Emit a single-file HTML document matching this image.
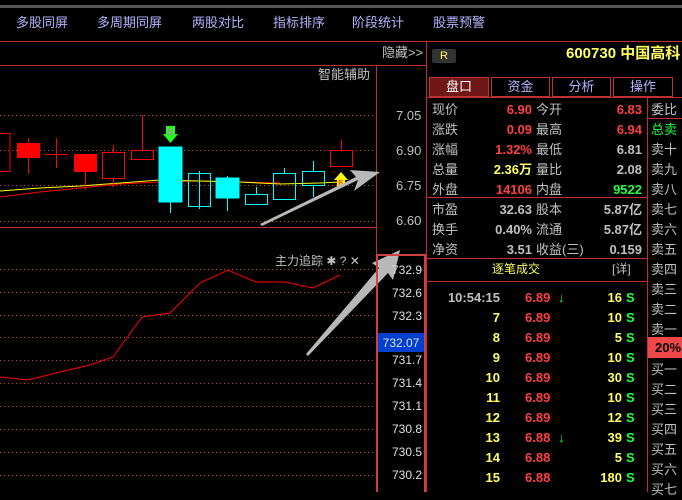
<!DOCTYPE html>
<html><head><meta charset="utf-8"><style>
*{margin:0;padding:0;box-sizing:border-box}
body{width:682px;height:492px;background:#000;overflow:hidden;position:relative;font-family:"Liberation Sans","Noto Sans CJK SC",sans-serif;font-size:13px}
.a{position:absolute;white-space:nowrap;line-height:16px}
.m{color:#b4b4ff;font-size:13px;top:15px}
.g{color:#c0c0c0}.r{color:#ff4040}.y{color:#ffff60}.gr{color:#20ff40}.w{color:#e0e0e0}
.rt{text-align:right}
.mono{font-family:"Liberation Mono","Noto Sans CJK SC",monospace}
</style></head><body>
<div class="a" style="left:0;top:5px;width:682px;height:3px;background:#555"></div>
<div class="a m" style="left:16px">多股同屏</div>
<div class="a m" style="left:97px">多周期同屏</div>
<div class="a m" style="left:192px">两股对比</div>
<div class="a m" style="left:273px">指标排序</div>
<div class="a m" style="left:352px">阶段统计</div>
<div class="a m" style="left:433px">股票预警</div>
<div class="a" style="left:0;top:41px;width:426px;height:1px;background:#c03030"></div>
<div class="a" style="left:426px;top:41px;width:256px;height:1px;background:#c03030"></div>
<div class="a" style="left:426px;top:41px;width:1px;height:451px;background:#c03030"></div>
<div class="a g" style="left:382px;top:45px">隐藏&gt;&gt;</div>
<div class="a" style="left:0;top:65px;width:426px;height:1px;background:#c03030"></div>
<div class="a" style="left:376px;top:65px;width:1px;height:190px;background:#c03030"></div>
<div class="a g" style="left:318px;top:67px">智能辅助</div>
<div class="a" style="left:0;top:227px;width:376px;height:1px;background:#c03030"></div>
<div class="a g" style="left:275px;top:253px;font-size:12px">主力追踪 ✱ ? ✕</div>
<svg class="a" style="left:0;top:0" width="426" height="492">
<g stroke="#d04040" stroke-dasharray="1,3" stroke-width="1">
<line x1="0" y1="115.5" x2="376" y2="115.5"/><line x1="0" y1="150.5" x2="376" y2="150.5"/><line x1="0" y1="185.5" x2="376" y2="185.5"/><line x1="0" y1="221.5" x2="376" y2="221.5"/>
<line x1="0" y1="269.5" x2="376" y2="269.5"/><line x1="0" y1="292.5" x2="376" y2="292.5"/><line x1="0" y1="315.5" x2="376" y2="315.5"/><line x1="0" y1="337.5" x2="376" y2="337.5"/><line x1="0" y1="360.5" x2="376" y2="360.5"/><line x1="0" y1="383.5" x2="376" y2="383.5"/><line x1="0" y1="406.5" x2="376" y2="406.5"/><line x1="0" y1="429.5" x2="376" y2="429.5"/><line x1="0" y1="452.5" x2="376" y2="452.5"/><line x1="0" y1="475.5" x2="376" y2="475.5"/>
</g>
<polyline fill="none" stroke="#ff0000" points="0,197 40,192 80,188 120,184 160,182 200,181 240,182 280,183"/>
<polyline fill="none" stroke="#ffff00" points="0,191 40,188 80,186 120,183 160,180 200,181 240,182 280,184 320,183 340,182"/>
<g stroke="#ff0000" fill="none">
<rect x="-5" y="133.5" width="15" height="38"/>
<rect x="17.5" y="143.5" width="22" height="14" fill="#ff0000"/><line x1="28.5" y1="138" x2="28.5" y2="174"/>
<line x1="56.5" y1="138" x2="56.5" y2="168"/><line x1="45" y1="154.5" x2="68" y2="154.5"/>
<rect x="74.5" y="154.5" width="22" height="17" fill="#ff0000"/><line x1="85.5" y1="171" x2="85.5" y2="190"/>
<rect x="102.5" y="152.5" width="22" height="26"/><line x1="113.5" y1="145" x2="113.5" y2="152"/><line x1="113.5" y1="178" x2="113.5" y2="187"/>
<rect x="131.5" y="150.5" width="22" height="9"/><line x1="142.5" y1="115" x2="142.5" y2="150"/>
<rect x="330.5" y="150.5" width="22" height="16"/><line x1="341.5" y1="140" x2="341.5" y2="150"/>
</g>
<g stroke="#00ffff" fill="none">
<rect x="159" y="147" width="23" height="55" fill="#00ffff"/><line x1="170.5" y1="202" x2="170.5" y2="213"/>
<rect x="188.5" y="173.5" width="22" height="33"/><line x1="199.5" y1="171" x2="199.5" y2="209"/>
<rect x="216" y="178" width="23" height="20" fill="#00ffff"/><line x1="227.5" y1="176" x2="227.5" y2="211"/>
<rect x="245.5" y="194.5" width="22" height="10"/><line x1="256.5" y1="187" x2="256.5" y2="194"/>
<rect x="273.5" y="173.5" width="22" height="26"/><line x1="284.5" y1="168" x2="284.5" y2="173"/>
<rect x="302.5" y="171.5" width="22" height="14"/><line x1="313.5" y1="161" x2="313.5" y2="171"/><line x1="313.5" y1="185" x2="313.5" y2="197"/>
</g>
<polygon points="163,134 178,134 170.5,143" fill="#20ff20"/><rect x="166" y="126" width="9" height="9" fill="#20ff20"/>
<text x="167" y="135" font-size="9" fill="#ff40ff" font-family="Liberation Sans">S</text>
<polygon points="334,180 341,172 348,180" fill="#ffff00"/><rect x="337" y="180" width="8" height="6" fill="#ffff00"/>
<text x="338" y="186" font-size="8" fill="#ff0000">B</text>
<polyline fill="none" stroke="#ff0000" points="0,377 28,380 60,372 90,365 113,357 142,317 170,313 200,283 228,270 256,282 285,282 313,288 340,275"/>
<polygon points="262,226 358,180 354,191 380,172 350,170 356,177 260,224" fill="#b8b8b8"/>
<polygon points="308,356 388,273 393,280 400,250 372,263 379,268 306,354" fill="#b8b8b8"/>
</svg>
<div class="a g" style="left:396px;top:108px">7.05</div>
<div class="a g" style="left:396px;top:143px">6.90</div>
<div class="a g" style="left:396px;top:178px">6.75</div>
<div class="a g" style="left:396px;top:213px">6.60</div>
<div class="a" style="left:376px;top:254px;width:50px;height:238px;border:2px solid #d04040;border-bottom:none"></div>
<div class="a" style="left:378px;top:333px;width:46px;height:19px;background:#0040d0"></div>
<div class="a w" style="left:378px;top:335px;width:46px;text-align:center;font-size:12px">732.07</div>
<div class="a w rt" style="left:378px;top:262px;width:44px;font-size:12px">732.9</div>
<div class="a w rt" style="left:378px;top:285px;width:44px;font-size:12px">732.6</div>
<div class="a w rt" style="left:378px;top:308px;width:44px;font-size:12px">732.3</div>
<div class="a w rt" style="left:378px;top:352px;width:44px;font-size:12px">731.7</div>
<div class="a w rt" style="left:378px;top:375px;width:44px;font-size:12px">731.4</div>
<div class="a w rt" style="left:378px;top:398px;width:44px;font-size:12px">731.1</div>
<div class="a w rt" style="left:378px;top:421px;width:44px;font-size:12px">730.8</div>
<div class="a w rt" style="left:378px;top:444px;width:44px;font-size:12px">730.5</div>
<div class="a w rt" style="left:378px;top:467px;width:44px;font-size:12px">730.2</div>

<div class="a" style="left:432px;top:49px;width:24px;height:14px;background:#333;border-radius:2px"></div>
<div class="a y" style="left:440px;top:48px;font-size:11px">R</div>
<div class="a y" style="left:566px;top:46px;font-size:15px;font-weight:bold">600730 中国高科</div>
<div class="a" style="left:429px;top:77px;width:60px;height:20px;background:#701818;border:1px solid #c03030;color:#fff;text-align:center;line-height:18px">盘口</div>
<div class="a" style="left:491px;top:77px;width:59px;height:20px;border:1px solid #c03030;color:#b4b4ff;text-align:center;line-height:18px">资金</div>
<div class="a" style="left:552px;top:77px;width:59px;height:20px;border:1px solid #c03030;color:#b4b4ff;text-align:center;line-height:18px">分析</div>
<div class="a" style="left:613px;top:77px;width:60px;height:20px;border:1px solid #c03030;color:#b4b4ff;text-align:center;line-height:18px">操作</div>
<div class="a" style="left:426px;top:97px;width:256px;height:1px;background:#c03030"></div>
<div class="a" style="left:647px;top:97px;width:1px;height:395px;background:#c03030"></div>
<div class="a" style="left:426px;top:197px;width:221px;height:1px;background:#c03030"></div>
<div class="a" style="left:426px;top:258px;width:221px;height:1px;background:#c03030"></div>
<div class="a" style="left:426px;top:281px;width:221px;height:1px;background:#c03030"></div>
<div class="a" style="left:647px;top:118px;width:35px;height:1px;background:#c03030"></div>

<div class="a g" style="left:432px;top:100px;line-height:20px">现价<br>涨跌<br>涨幅<br>总量<br>外盘</div>
<div class="a rt" style="left:470px;top:100px;width:62px;line-height:20px;font-weight:bold"><span class="r">6.90</span><br><span class="r">0.09</span><br><span class="r">1.32%</span><br><span class="y">2.36万</span><br><span class="r">14106</span></div>
<div class="a g" style="left:536px;top:100px;line-height:20px">今开<br>最高<br>最低<br>量比<br>内盘</div>
<div class="a rt" style="left:590px;top:100px;width:52px;line-height:20px;font-weight:bold"><span class="r">6.83</span><br><span class="r">6.94</span><br><span class="g">6.81</span><br><span class="g">2.08</span><br><span class="gr">9522</span></div>
<div class="a g" style="left:432px;top:200px;line-height:20px">市盈<br>换手<br>净资</div>
<div class="a g rt" style="left:470px;top:200px;width:62px;line-height:20px;font-weight:bold">32.63<br>0.40%<br>3.51</div>
<div class="a g" style="left:536px;top:200px;line-height:20px">股本<br>流通<br>收益(三)</div>
<div class="a g rt" style="left:590px;top:200px;width:52px;line-height:20px;font-weight:bold">5.87亿<br>5.87亿<br>0.159</div>

<div class="a y" style="left:492px;top:261px;font-size:12px">逐笔成交</div>
<div class="a g" style="left:612px;top:261px;font-size:12px">[详]</div>
<div class="a rt" style="left:430px;top:288px;width:70px;line-height:20px;font-weight:bold"><span class="g">10:54:15</span><br><span class="y">7<br>8<br>9<br>10<br>11<br>12<br>13<br>14<br>15</span></div>
<div class="a r" style="left:525px;top:288px;line-height:20px;font-weight:bold">6.89<br>6.89<br>6.89<br>6.89<br>6.89<br>6.89<br>6.89<br>6.88<br>6.88<br>6.88</div>
<div class="a gr" style="left:558px;top:288px;line-height:20px;font-weight:bold">↓<br><br><br><br><br><br><br>↓</div>
<div class="a y rt" style="left:580px;top:288px;width:42px;line-height:20px;font-weight:bold">16<br>10<br>5<br>10<br>30<br>10<br>12<br>39<br>5<br>180</div>
<div class="a gr" style="left:626px;top:288px;line-height:20px;font-weight:bold">S<br>S<br>S<br>S<br>S<br>S<br>S<br>S<br>S<br>S</div>

<div class="a g" style="left:651px;top:100px;line-height:20px">委比</div>
<div class="a g" style="left:651px;top:120px;line-height:20px"><span class="gr">总卖</span><br>卖十<br>卖九<br>卖八<br>卖七<br>卖六<br>卖五<br>卖四<br>卖三<br>卖二<br>卖一</div>
<div class="a" style="left:648px;top:337px;width:34px;height:21px;background:#f04848"></div>
<div class="a" style="left:655px;top:340px;color:#000;font-weight:bold">20%</div>
<div class="a g" style="left:651px;top:360px;line-height:20px">买一<br>买二<br>买三<br>买四<br>买五<br>买六<br>买七</div>
</body></html>
